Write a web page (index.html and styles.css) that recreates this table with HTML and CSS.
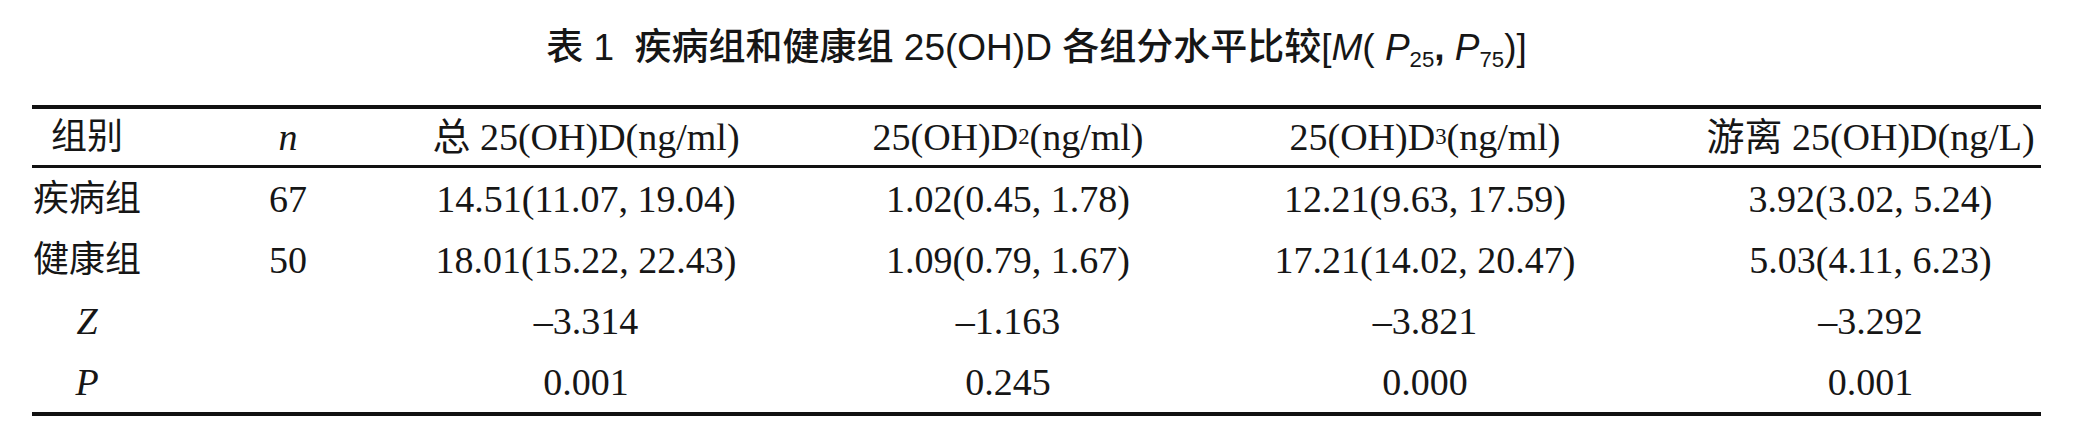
FILE: index.html
```
<!DOCTYPE html>
<html lang="zh-CN">
<head>
    <meta charset="UTF-8">
    <title>表 1 疾病组和健康组 25(OH)D 各组分水平比较</title>
    <link rel="stylesheet" href="styles.css">
</head>
<body>

<div class="page">
    <div class="caption">表 1&nbsp;&nbsp;疾病组和健康组 25(OH)D 各组分水平比较[<i>M</i>(&nbsp;<i>P</i><sub>25</sub><b>,</b>&nbsp;<i>P</i><sub>75</sub>)]</div>

    <div class="data-table">
        <div class="row head">
            <div class="cell cn">组别</div>
            <div class="cell"><i>n</i></div>
            <div class="cell">总 25(OH)D(ng/ml)</div>
            <div class="cell">25(OH)D<sub>2</sub>(ng/ml)</div>
            <div class="cell">25(OH)D<sub>3</sub>(ng/ml)</div>
            <div class="cell last">游离 25(OH)D(ng/L)</div>
        </div>
        <div class="row">
            <div class="cell cn">疾病组</div>
            <div class="cell">67</div>
            <div class="cell">14.51(11.07, 19.04)</div>
            <div class="cell">1.02(0.45, 1.78)</div>
            <div class="cell">12.21(9.63, 17.59)</div>
            <div class="cell last">3.92(3.02, 5.24)</div>
        </div>
        <div class="row">
            <div class="cell cn">健康组</div>
            <div class="cell">50</div>
            <div class="cell">18.01(15.22, 22.43)</div>
            <div class="cell">1.09(0.79, 1.67)</div>
            <div class="cell">17.21(14.02, 20.47)</div>
            <div class="cell last">5.03(4.11, 6.23)</div>
        </div>
        <div class="row">
            <div class="cell"><i>Z</i></div>
            <div class="cell"></div>
            <div class="cell">–3.314</div>
            <div class="cell">–1.163</div>
            <div class="cell">–3.821</div>
            <div class="cell last">–3.292</div>
        </div>
        <div class="row">
            <div class="cell"><i>P</i></div>
            <div class="cell"></div>
            <div class="cell">0.001</div>
            <div class="cell">0.245</div>
            <div class="cell">0.000</div>
            <div class="cell last">0.001</div>
        </div>
    </div>
</div>

</body>
</html>
```

FILE: styles.css
```
body {
    margin: 0;
    padding: 0;
    background: #fff;
    color: #161616;
}
.page {
    width: 2009px;
    padding: 0 43px 0 32px;
}
.caption {
    font-family: "Liberation Sans", "Noto Sans CJK SC", sans-serif;
    font-size: 37px;
    font-weight: 500;
    line-height: 40px;
    text-align: center;
    padding-top: 28px;
    margin-bottom: 37px;
}
.caption sub {
    font-size: 0.6em;
    line-height: 0;
    vertical-align: -0.3em;
}
.data-table {
    border-top: 4px solid #111;
    border-bottom: 4px solid #111;
    font-family: "Liberation Serif", "Noto Sans CJK SC", serif;
    font-size: 38px;
    line-height: 1;
}
.row {
    display: grid;
    grid-template-columns: 110px 292px 304px 540px 294px 1fr;
    height: 61px;
}
.row.head {
    height: 56px;
    border-bottom: 3px solid #111;
}
.cell {
    display: flex;
    align-items: center;
    justify-content: center;
    white-space: nowrap;
}
.cell.last {
    padding-left: 128px;
}
.cell.cn {
    font-size: 36px;
}
.cell sub {
    font-size: 0.6em;
    line-height: 0;
    vertical-align: -0.4em;
}
```
